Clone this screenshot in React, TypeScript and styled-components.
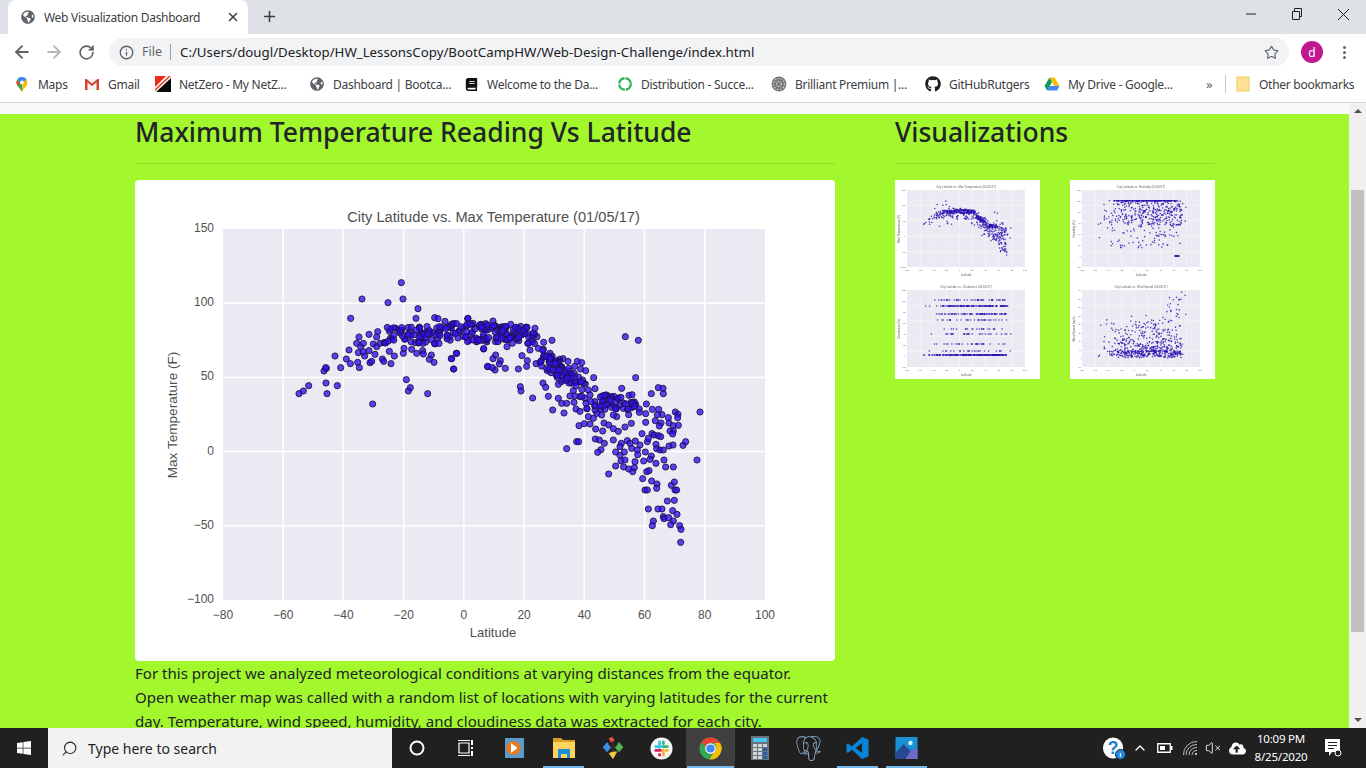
import styled, { createGlobalStyle } from 'styled-components';
import { ArrowLeft, ArrowRight, RotateCw, Info, Star, X, Plus, ChevronUp, Search, VolumeX } from 'lucide-react';
import { FaGlobeAmericas, FaGithub, FaWindows, FaBook, FaCloudUploadAlt } from 'react-icons/fa';
import { SiPostgresql } from 'react-icons/si';
import type { ReactNode } from 'react';

const GlobalStyle = createGlobalStyle`
	html, body, #root {
		margin: 0;
		height: 100%;
		overflow: hidden;
	}
	body {
		font-family: 'Noto Sans', 'Open Sans', sans-serif;
		color: #212529;
	}
`;

const Frame = styled.div`
	display: flex;
	flex-direction: column;
	height: 768px;
	width: 1366px;
	overflow: hidden;
`;

/* ---------- browser chrome ---------- */

const TabStrip = styled.div`
	display: flex;
	align-items: flex-end;
	height: 34px;
	padding-left: 8px;
	background: #dee1e6;
	flex: none;
`;

const Tab = styled.div`
	display: flex;
	align-items: center;
	width: 240px;
	height: 34px;
	padding: 0 8px 0 13px;
	box-sizing: border-box;
	background: #fff;
	border-radius: 8px 8px 0 0;
	font-size: 12px;
	color: #3c4043;
`;

const TabTitle = styled.span`
	flex: 1;
	margin-left: 9px;
	white-space: nowrap;
	letter-spacing: -0.3px;
`;

const NewTab = styled.div`
	display: flex;
	margin: 0 0 9px 13px;
	color: #3c4043;
`;

const WindowControls = styled.div`
	display: flex;
	align-items: center;
	margin-left: auto;
	height: 28px;
	align-self: flex-start;
	color: #202124;
`;

const WindowButton = styled.div`
	display: flex;
	justify-content: center;
	align-items: center;
	width: 46px;
`;

const Toolbar = styled.div`
	display: flex;
	align-items: center;
	height: 32px;
	background: #fff;
	flex: none;
`;

const NavButton = styled.div<{ $off?: boolean }>`
	display: flex;
	justify-content: center;
	width: 32px;
	margin-top: 4px;
	color: ${props => (props.$off ? '#b4b6b9' : '#5f6368')};
	&:first-child {
		margin-left: 6px;
	}
`;

const Omnibox = styled.div`
	display: flex;
	align-items: center;
	width: 1180px;
	height: 28px;
	margin: 4px 0 0 7px;
	padding: 0 10px;
	box-sizing: border-box;
	background: #f1f3f4;
	border-radius: 14px;
	font-size: 13.28px;
	color: #202124;
`;

const FileLabel = styled.span`
	margin-left: 8px;
	padding-right: 8px;
	border-right: 1px solid #9aa0a6;
	line-height: 16px;
	color: #5f6368;
	font-size: 12.5px;
`;

const Url = styled.span`
	flex: 1;
	margin-left: 9px;
	white-space: nowrap;
`;

const Avatar = styled.div`
	display: flex;
	justify-content: center;
	align-items: center;
	width: 22px;
	height: 22px;
	margin: 4px 0 0 12px;
	border-radius: 50%;
	background: #c2188f;
	color: #fff;
	font-size: 12px;
`;

const MenuDots = styled.div`
	display: flex;
	flex-direction: column;
	gap: 2px;
	margin: 4px 0 0 20px;
	i {
		display: block;
		width: 3px;
		height: 3px;
		border-radius: 50%;
		background: #5f6368;
	}
`;

const BookmarkBar = styled.div`
	display: flex;
	align-items: center;
	height: 36px;
	padding-left: 14px;
	background: #fff;
	border-bottom: 1px solid #d5d6d8;
	flex: none;
`;

const Bookmark = styled.div<{ $w: number }>`
	display: flex;
	align-items: center;
	gap: 8px;
	width: ${props => props.$w}px;
	flex: none;
	font-size: 12px;
	color: #3c4043;
	white-space: nowrap;
	letter-spacing: -0.27px;
`;

const IconSlot = styled.span`
	display: flex;
	justify-content: center;
	align-items: center;
	width: 16px;
	height: 18px;
	flex: none;
`;

const BarDivider = styled.div`
	width: 1px;
	height: 18px;
	margin: 0 9px;
	background: #c6c8ca;
`;

const Chevrons = styled.span`
	margin-left: 36px;
	width: 10px;
	font-size: 13px;
	color: #5f6368;
`;

/* ---------- page ---------- */

const Viewport = styled.div`
	display: flex;
	flex: 1;
	min-height: 0;
`;

const PageArea = styled.div`
	display: flex;
	flex-direction: column;
	flex: 1;
	min-width: 0;
	background: #a3f72d;
	overflow: hidden;
`;

const NavRemnant = styled.div`
	height: 11px;
	background: #f8f9fa;
	flex: none;
`;

const Columns = styled.div`
	display: flex;
	gap: 60px;
	padding: 1px 0 0 135px;
`;

const MainColumn = styled.section`
	width: 700px;
	flex: none;
`;

const SideColumn = styled.aside`
	width: 320px;
	flex: none;
`;

const Heading = styled.h3`
	margin: 0 0 16px;
	padding-bottom: 14px;
	border-bottom: 1px solid rgba(0, 0, 0, 0.1);
	font-size: 26.5px;
	line-height: 34px;
	font-weight: 500;
	white-space: nowrap;
	color: #212529;
`;

const ChartCard = styled.div`
	width: 700px;
	height: 481px;
	background: #fff;
	border-radius: 4px;
	svg {
		display: block;
	}
`;

const Blurb = styled.p`
	margin: 0;
	font-size: 15.05px;
	line-height: 24px;
	white-space: nowrap;
	color: #212529;
`;

const ThumbGrid = styled.div`
	display: grid;
	grid-template-columns: 145px 145px;
	column-gap: 30px;
`;

const Thumb = styled.div`
	background: #fff;
	width: 145px;
	height: 99.5px;
	overflow: hidden;
	svg {
		display: block;
		filter: blur(0.5px);
	}
`;

const ScrollTrack = styled.div`
	display: flex;
	flex-direction: column;
	align-items: center;
	width: 17px;
	background: #f0f0f0;
	flex: none;
`;

const ScrollArrow = styled.div<{ $down?: boolean }>`
	width: 0;
	height: 0;
	margin: 6px 0;
	border-left: 4px solid transparent;
	border-right: 4px solid transparent;
	${props => (props.$down ? 'border-top: 4px solid #505050;' : 'border-bottom: 4px solid #505050;')}
`;

const ScrollThumb = styled.div`
	width: 13px;
	height: 442px;
	margin: 71px 0 auto;
	background: #c1c1c1;
`;

/* ---------- taskbar ---------- */

const Taskbar = styled.div`
	display: flex;
	align-items: stretch;
	height: 40px;
	background: #202020;
	flex: none;
	color: #fff;
`;

const StartButton = styled.div`
	display: flex;
	justify-content: center;
	align-items: center;
	width: 48px;
`;

const SearchBox = styled.div`
	display: flex;
	align-items: center;
	gap: 10px;
	width: 344px;
	padding-left: 13px;
	box-sizing: border-box;
	background: #f2f2f2;
	color: #222;
	font-size: 14px;
	svg {
		transform: scaleX(-1);
	}
`;

const TaskCell = styled.div<{ $open?: boolean; $active?: boolean }>`
	position: relative;
	display: flex;
	justify-content: center;
	align-items: center;
	width: 49px;
	background: ${props => (props.$active ? '#3f3f3f' : 'transparent')};
	&::after {
		content: '';
		display: ${props => (props.$open || props.$active ? 'block' : 'none')};
		position: absolute;
		bottom: 0;
		left: ${props => (props.$active ? 1 : 4)}px;
		right: ${props => (props.$active ? 1 : 4)}px;
		height: 2px;
		background: #76b9ed;
	}
`;

const Tray = styled.div`
	display: flex;
	align-items: stretch;
	margin-left: auto;
	padding-right: 12px;
`;

const TrayCell = styled.div<{ $w: number }>`
	display: flex;
	justify-content: center;
	align-items: center;
	width: ${props => props.$w}px;
	color: #fff;
`;

const Clock = styled.div`
	display: flex;
	flex-direction: column;
	justify-content: center;
	align-items: center;
	gap: 2px;
	width: 62px;
	font-size: 11.5px;
	line-height: 16px;
	letter-spacing: -0.2px;
	white-space: nowrap;
`;

/* ---------- drawings ---------- */

const MapsIcon = () => (
	<svg width='16' height='17' viewBox='0 0 16 16'>
		<path d='M8 .5a5.500 5.500 0 0 0-5.500 5.500c0 3.600 4 6 5.500 9.500z' fill='#34a853' />
		<path d='M8 .5A5.500 5.500 0 0 1 13.500 6c0 3.600-4 6-5.500 9.500z' fill='#fbbc04' />
		<path d='M3.500 2.800a5.500 5.500 0 0 1 9 0L8 7z' fill='#4285f4' />
		<path d='M3.200 3.500 6 6.500 3.800 9.500a5.500 5.500 0 0 1-.6-6z' fill='#ea4335' />
		<circle cx='8' cy='6' r='1.900' fill='#fff' />
	</svg>
);

const GmailIcon = () => (
	<svg width='16' height='16' viewBox='0 0 16 16'>
		<path d='M1 3h14v11H1z' fill='#f2f2f2' />
		<path d='M1 3v11h2.500V6.500L8 10l4.500-3.500V14H15V3h-1.500L8 7.500 2.500 3z' fill='#d9402f' />
	</svg>
);

const NetZeroIcon = () => (
	<svg width='16' height='16' viewBox='0 0 16 16'>
		<path d='M0 0h16v16H0z' fill='#fff' />
		<path d='M0 11 11 0H0z M0 13 14 0h2L0 15z' fill='#ee2b14' />
		<path d='M1 16 16 2v14z' fill='#0a0a0a' />
	</svg>
);

const RingIcon = () => (
	<svg width='16' height='16' viewBox='0 0 16 16'>
		<circle cx='8' cy='8' r='5.800' fill='none' stroke='#2fb457' strokeWidth='2.400' strokeDasharray='8 1.100' />
	</svg>
);

const BrilliantIcon = () => (
	<svg width='16' height='16' viewBox='0 0 16 16'>
		<circle cx='8' cy='8' r='7.500' fill='#777' />
		<circle cx='8' cy='8' r='5.500' fill='none' stroke='#ccc' strokeWidth='1.200' strokeDasharray='1.500 1.500' />
		<circle cx='8' cy='8' r='2.500' fill='none' stroke='#ddd' strokeWidth='1.200' strokeDasharray='1 1' />
	</svg>
);

const DriveIcon = () => (
	<svg width='16' height='16' viewBox='0 0 16 16'>
		<path d='M5.500 1.500h5L15.500 10h-5z' fill='#fbbc04' />
		<path d='M5.500 1.500 .5 10 3 14.500 8 6z' fill='#0f9d58' />
		<path d='M3 14.500h10L15.500 10h-10z' fill='#4285f4' />
	</svg>
);

const FolderBookmark = () => (
	<svg width='14' height='16' viewBox='0 0 14 16'>
		<path d='M1 1h12v14H1z' fill='#fde293' stroke='#e8c65a' strokeWidth='1' />
	</svg>
);

const RestoreWindow = () => (
	<svg width='12' height='12' viewBox='0 0 12 12' fill='none' stroke='#202124'>
		<path d='M1.500 3.500h7v8h-7z M3.500 3.500V.5h7v8h-2' />
	</svg>
);

const MinWindow = () => (
	<svg width='12' height='12' viewBox='0 0 12 12'>
		<path d='M1 6h10' stroke='#202124' />
	</svg>
);

const CloseWindow = () => (
	<svg width='13' height='13' viewBox='0 0 13 13'>
		<path d='M1 1l11 11M12 1 1 12' stroke='#202124' />
	</svg>
);

const CortanaIcon = () => (
	<svg width='18' height='18' viewBox='0 0 18 18'>
		<circle cx='9' cy='9' r='6.500' fill='none' stroke='#fff' strokeWidth='2' />
	</svg>
);

const TaskViewIcon = () => (
	<svg width='18' height='18' viewBox='0 0 18 18' fill='none' stroke='#fff' strokeWidth='1.200'>
		<path d='M2 4h10v10H2z M1 1.500h12 M1 16.500h12' />
		<path d='M15 1v5 M15 8v2 M15 12v5' strokeWidth='2' />
	</svg>
);

const MediaIcon = () => (
	<svg width='19' height='20' viewBox='0 0 19 20'>
		<path d='M0 0h19v20H0z' fill='#5b9bc9' />
		<circle cx='8.500' cy='10' r='7' fill='#e87a1d' />
		<path d='M6 5 12.500 10 6 15z' fill='#fff' />
	</svg>
);

const FolderIcon = () => (
	<svg width='22' height='20' viewBox='0 0 22 20'>
		<path d='M0 0h8l2 2h12v4H0z' fill='#d99e22' />
		<path d='M0 4h22v16H0z' fill='#ffd35c' />
		<path d='M5 11h12v9h-3v-4H8v4H5z' fill='#1d8fd6' />
	</svg>
);

const KrakenIcon = () => (
	<svg width='24' height='24' viewBox='0 0 26 28'>
		<path d='M1 13l5-6 5 6-5 6z' fill='#3f8fe0' />
		<path d='M15 13l5-6 5 6-5 6z' fill='#4fb553' />
		<path d='M8 3l4-2 3 4-4 3z' fill='#e8533f' />
		<path d='M13 18l5 0-5 9-5-7z' fill='#f2c83c' />
		<path d='M13 6v12M8 9l5 6 5-6' stroke='#3b2a2a' strokeWidth='1.800' fill='none' />
	</svg>
);

const SlackIcon = () => (
	<svg width='23' height='23' viewBox='0 0 24 24'>
		<circle cx='12' cy='12' r='11.500' fill='#f6f6f6' />
		<path d='M10 5v6' stroke='#36c5f0' strokeWidth='2.800' strokeLinecap='round' />
		<path d='M6 10h3' stroke='#36c5f0' strokeWidth='2.800' strokeLinecap='round' />
		<path d='M18 10h-5' stroke='#2eb67d' strokeWidth='2.800' strokeLinecap='round' />
		<path d='M14 5v2' stroke='#2eb67d' strokeWidth='2.800' strokeLinecap='round' />
		<path d='M14 19v-5' stroke='#ecb22e' strokeWidth='2.800' strokeLinecap='round' />
		<path d='M18 14h-1' stroke='#ecb22e' strokeWidth='2.800' strokeLinecap='round' />
		<path d='M6 14h5' stroke='#e01e5a' strokeWidth='2.800' strokeLinecap='round' />
		<path d='M10 19v-1' stroke='#e01e5a' strokeWidth='2.800' strokeLinecap='round' />
	</svg>
);

const ChromeIcon = () => (
	<svg width='23' height='23' viewBox='0 0 24 24'>
		<circle cx='12' cy='12' r='11.500' fill='#34a853' />
		<path d='M12 .5A11.500 11.500 0 0 1 22 6.300H12a5.700 5.700 0 0 0-5.300 3.600L2.400 5.700A11.500 11.500 0 0 1 12 .5z' fill='#ea4335' />
		<path d='M22 6.300A11.500 11.500 0 0 1 11 23.500l5-8.200a5.700 5.700 0 0 0 0-9z' fill='#fbbc04' />
		<circle cx='12' cy='12' r='5.500' fill='#fff' />
		<circle cx='12' cy='12' r='4.300' fill='#4285f4' />
	</svg>
);

const CalcIcon = () => (
	<svg width='18' height='24' viewBox='0 0 18 24'>
		<path d='M0 0h18v24H0z' fill='#6a7379' />
		<path d='M2 2h14v4H2z' fill='#42c6f0' />
		{[8, 12, 16, 20].flatMap(y =>
			[2, 7, 12].map(x => (
				<rect key={`${x}-${y}`} x={x} y={y} width='4' height='3' fill={x === 12 && y > 8 ? '#1f5fa8' : '#cfd4d8'} />
			))
		)}
	</svg>
);

const CodeIcon = () => (
	<svg width='25' height='24' viewBox='0 0 26 26'>
		<path d='M18 1 25 4v18l-7 3-11-10-4.500 3.500L1 17v-8l1.500-.8L7 11.500zM18 7.500 11 13l7 5.500z' fill='#0a84d6' fillRule='evenodd' />
	</svg>
);

const PhotosIcon = () => (
	<svg width='23' height='22' viewBox='0 0 22 22'>
		<path d='M0 0h22v22H0z' fill='#1992d4' />
		<circle cx='15' cy='6' r='2.200' fill='#d8f0fb' />
		<path d='M0 16 8 7l7 7 7-3v11H0z' fill='#27478f' />
		<path d='M10 22l5-8 7-3v11z' fill='#6d6cc5' />
	</svg>
);

const HelpIcon = () => (
	<svg width='24' height='23' viewBox='0 0 26 25'>
		<ellipse cx='12' cy='12' rx='11' ry='11.500' fill='#fff' />
		<text x='12' y='19' textAnchor='middle' fontFamily='Liberation Sans, sans-serif' fontWeight='700' fontSize='19' fill='#1a7fd0'>?</text>
		<circle cx='20' cy='19' r='5.500' fill='#1e88e5' stroke='#202020' />
		<path d='M20 17.500v4' stroke='#fff' strokeWidth='1.400' />
	</svg>
);

const BatteryIcon = () => (
	<svg width='16' height='12' viewBox='0 0 16 12'>
		<path d='M.75 1.750h12.500v8.500H.75z' fill='none' stroke='#fff' strokeWidth='1.300' />
		<path d='M3 4h5v4H3z M14 4h1.500v4H14z' fill='#fff' />
	</svg>
);

const WifiIcon = () => (
	<svg width='16' height='16' viewBox='0 0 16 16' fill='none' stroke='#bbb' strokeWidth='1'>
		<path d='M1.500 15A13 13 0 0 1 15 1.500 M4 15A10.500 10.500 0 0 1 15 4.500 M7 15A7.500 7.500 0 0 1 15 7.500 M10 15A5 5 0 0 1 15 10.500' />
		<circle cx='14' cy='14' r='1' fill='#fff' stroke='none' />
	</svg>
);

const NotifyIcon = () => (
	<svg width='18' height='20' viewBox='0 0 18 20'>
		<path d='M1 1h15v13H8l-3 4v-4H1z' fill='#fff' />
		<path d='M4 4.500h9M4 7.500h9M4 10.500h6' stroke='#202020' strokeWidth='1.200' />
		<circle cx='14' cy='15' r='3' fill='#202020' stroke='#fff' />
	</svg>
);

/* ---------- chart data ---------- */

function makeRandom(seed: number) {
	let s = seed;
	return () => {
		s = (s * 16807) % 2147483647;
		return (s - 1) / 2147483646;
	};
}

// read off the picture, as [x, y] in the 3x crops
const leftCrop = [
	[447, 581], [460, 573], [476, 557], [528, 549], [531, 581], [562, 557], [522, 513], [529, 505], [527, 503], [555, 468],
	[572, 503], [589, 477], [597, 450], [601, 491], [602, 355], [623, 487], [628, 503], [627, 411], [636, 297], [644, 468],
	[657, 403], [660, 488], [665, 484], [668, 612], [675, 463], [683, 395], [680, 411], [697, 477], [701, 484], [714, 308],
	[723, 491], [718, 454], [733, 468], [754, 248], [759, 297], [804, 326], [798, 355], [769, 539], [781, 563], [775, 573],
	[833, 581], [852, 487], [844, 465], [838, 478], [822, 400], [854, 353], [864, 356], [885, 364], [904, 476], [911, 507],
	[919, 460], [953, 356], [1001, 447], [1013, 500], [620, 430], [632, 440], [640, 430], [625, 458], [640, 455], [657, 452],
	[670, 432], [680, 440], [690, 430], [702, 428], [760, 460], [762, 445], [785, 448], [800, 460], [818, 452], [820, 462],
];

const rightCrop = [
	[54, 55], [69, 70], [107, 71], [129, 63], [137, 78], [182, 73], [198, 82], [212, 92], [235, 102], [261, 110], [306, 121],
	[281, 127], [243, 122], [233, 130], [240, 150], [265, 145], [280, 148], [300, 160], [298, 180], [272, 185], [258, 191],
	[230, 199], [232, 182], [216, 167], [205, 207], [166, 205], [135, 210], [127, 203], [113, 199], [151, 182], [148, 192],
	[129, 176], [137, 165], [101, 146], [20, 160], [5, 176], [11, 207], [171, 140], [339, 176], [329, 178], [354, 184],
	[382, 184], [395, 188], [374, 199], [392, 207], [407, 212], [431, 233], [335, 200], [320, 208], [292, 212], [303, 218],
	[318, 225], [340, 220], [355, 225], [325, 253], [279, 249], [287, 262], [295, 289], [248, 294], [308, 330], [342, 339],
	[378, 327], [390, 334], [211, 260], [213, 273], [350, 240], [378, 247], [390, 245], [406, 252], [415, 270], [435, 266],
	[370, 272], [360, 288], [375, 288], [390, 290], [405, 295], [420, 285], [325, 295], [335, 310], [350, 310], [372, 307],
	[408, 310], [435, 305], [457, 288], [468, 300], [484, 312], [505, 294], [515, 265], [537, 286], [557, 233], [526, 110],
	[565, 121], [604, 281], [625, 263], [639, 265], [640, 281], [589, 312], [607, 328], [626, 328], [636, 344], [622, 344],
	[676, 336], [684, 343], [683, 353], [750, 336], [655, 353], [657, 369], [670, 377], [685, 376], [660, 393], [670, 393],
	[668, 402], [587, 341], [587, 367], [616, 362], [633, 369], [628, 378], [544, 370], [525, 381], [462, 369], [476, 375],
	[490, 386], [505, 394], [458, 393], [437, 387], [387, 377], [403, 371], [420, 372], [430, 355], [415, 350], [440, 340],
	[455, 345], [453, 327], [435, 330], [500, 350], [490, 345], [510, 315], [520, 325], [545, 323], [557, 313], [568, 327],
	[568, 337], [536, 344], [576, 401], [606, 401], [612, 405], [625, 407], [632, 410], [592, 425], [595, 415], [618, 433],
	[620, 446], [630, 450], [640, 450], [657, 438], [669, 435], [699, 436], [707, 425], [741, 480], [436, 417], [448, 420],
	[463, 430], [490, 420], [514, 430], [510, 440], [497, 456], [510, 466], [523, 456], [532, 422], [540, 430], [556, 423],
	[570, 435], [545, 445], [562, 450], [563, 464], [586, 456], [604, 468], [600, 478], [581, 483], [555, 485], [513, 483],
	[525, 480], [497, 498], [521, 501], [536, 507], [548, 515], [553, 503], [476, 522], [453, 449], [443, 457], [350, 446],
	[380, 425], [386, 425], [618, 490], [642, 480], [647, 501], [670, 501], [590, 515], [597, 512], [578, 536], [605, 543],
	[621, 552], [620, 565], [585, 570], [592, 570], [664, 556], [673, 546], [675, 570], [680, 570], [652, 603], [673, 601],
	[595, 627], [624, 627], [636, 627], [668, 632], [681, 643], [640, 650], [642, 656], [656, 653], [670, 663], [662, 674],
	[610, 663], [607, 677], [689, 677], [693, 688], [692, 727],
];

function buildTemperaturePoints() {
	const rand = makeRandom(4711);
	const pts: [number, number][] = [
		...leftCrop.map(([x, y]) => [150 + x / 3, 200 + y / 3] as [number, number]),
		...rightCrop.map(([x, y]) => [450 + x / 3, 300 + y / 3] as [number, number]),
	];
	// the dense band over the equator
	for (let i = 0; i < 190; i++) {
		const x = 385 + rand() * 150;
		const top = x < 450 ? 326 : 323 + (x - 450) * 0.04;
		pts.push([x, top + rand() * 18]);
	}
	for (let i = 0; i < 60; i++) {
		const x = 540 + rand() * 45;
		pts.push([x, 345 + (x - 540) * 0.8 + rand() * 20]);
	}
	for (let i = 0; i < 40; i++) {
		pts.push([585 + rand() * 50, 402 + (rand() - 0.5) * 16]);
	}
	return pts;
}

const temperaturePoints = buildTemperaturePoints();

type MiniPoint = [number, number];

// latitude position (0-1 of the plot width) taken from the big chart
const latShare = temperaturePoints.map(([x]) => (x - 223) / 542);

const miniCharts: { title: string; yLabel: string; ticks: number[]; points: MiniPoint[] }[] = [
	{
		title: 'City Latitude vs. Max Temperature (01/05/17)',
		yLabel: 'Max Temperature (F)',
		ticks: [150, 100, 50, 0, -50, -100],
		points: temperaturePoints.map(([x, y]) => [12 + ((x - 223) / 542) * 118, 10 + ((y - 229) / 371) * 77]),
	},
	{
		title: 'City Latitude vs. Humidity (01/05/17)',
		yLabel: 'Humidity (%)',
		ticks: [120, 100, 80, 60, 40, 20, 0, -20],
		points: (() => {
			const rand = makeRandom(91);
			return latShare.map((lat, i): MiniPoint => {
				const pick = rand();
				const x = 12 + lat * 118;
				if (lat > 0.79 && lat < 0.83 && i % 3 === 0) return [x, 76];
				if (pick < 0.3 && lat > 0.22 && lat < 0.8) return [x, 20.7];
				if (pick < 0.75) return [x, 21 + rand() * 24];
				return [x, 28 + rand() * 40];
			});
		})(),
	},
	{
		title: 'City Latitude vs. Cloudiness (01/05/17)',
		yLabel: 'Cloudiness (%)',
		ticks: [120, 100, 80, 60, 40, 20, 0, -20],
		points: (() => {
			const rand = makeRandom(2024);
			const rows = [75, 75, 75, 75, 75, 75, 26, 26, 26, 26, 34, 34, 34, 40, 49, 54, 64, 71, 20];
			return latShare.map((lat): MiniPoint => [12 + lat * 118, rows[Math.floor(rand() * rows.length)]]);
		})(),
	},
	{
		title: 'City Latitude vs. Wind Speed (01/05/17)',
		yLabel: 'Wind Speed (mph)',
		ticks: [40, 35, 30, 25, 20, 15, 10, 5, 0, -5],
		points: (() => {
			const rand = makeRandom(777);
			return latShare.map((lat): MiniPoint => {
				const r = rand();
				const spread = lat > 0.72 ? 62 : 36;
				return [12 + lat * 118, 78 - r * r * r * spread - rand() * 7];
			});
		})(),
	},
];

const xTicks = [-80, -60, -40, -20, 0, 20, 40, 60, 80, 100];
const yTicks = [150, 100, 50, 0, -50, -100];
const CHART_FONT = 'Liberation Sans, Arial, sans-serif';

const fmt = (n: number) => String(n).replace('-', '\u2212');

function TemperatureChart() {
	const xAt = (lat: number) => 223 + ((lat + 80) / 180) * 542;
	const yAt = (t: number) => 229 + ((150 - t) / 250) * 371;
	return (
		<svg width='700' height='481' viewBox='135 180 700 481'>
			<rect x='223' y='229' width='542' height='371' fill='#eaeaf2' />
			{xTicks.slice(1, -1).map(t => (
				<line key={t} x1={xAt(t)} x2={xAt(t)} y1='229' y2='600' stroke='#fff' strokeWidth='1.500' />
			))}
			{yTicks.slice(1, -1).map(t => (
				<line key={t} x1='223' x2='765' y1={yAt(t)} y2={yAt(t)} stroke='#fff' strokeWidth='1.500' />
			))}
			<g fontFamily={CHART_FONT} fill='#505050'>
				<text x='493.500' y='222' textAnchor='middle' fontSize='14.650'>City Latitude vs. Max Temperature (01/05/17)</text>
				{yTicks.map(t => (
					<text key={t} x='214' y={yAt(t) + 3} textAnchor='end' fontSize='12'>{fmt(t)}</text>
				))}
				{xTicks.map(t => (
					<text key={t} x={xAt(t)} y='619' textAnchor='middle' fontSize='12'>{fmt(t)}</text>
				))}
				<text x='493' y='637' textAnchor='middle' fontSize='13'>Latitude</text>
				<text transform='translate(177 415) rotate(-90)' textAnchor='middle' fontSize='13.600'>Max Temperature (F)</text>
			</g>
			<g fill='#3a0cf2' fillOpacity='0.78' stroke='#14143c' strokeOpacity='0.85' strokeWidth='1'>
				{temperaturePoints.map(([x, y], i) => (
					<circle key={i} cx={x} cy={y} r='3.100' />
				))}
			</g>
		</svg>
	);
}

function MiniChart({ chart }: { chart: (typeof miniCharts)[number] }) {
	return (
		<svg width='145' height='99.500' viewBox='0 0 145 99.500'>
			<rect x='12' y='10' width='118' height='77' fill='#eaeaf2' />
			{[1, 2, 3, 4, 5, 6, 7, 8].map(i => (
				<line key={i} x1={12 + i * 13.100} x2={12 + i * 13.100} y1='10' y2='87' stroke='#fff' strokeWidth='0.400' />
			))}
			{[1, 2, 3, 4].map(i => (
				<line key={i} x1='12' x2='130' y1={10 + i * 15.400} y2={10 + i * 15.400} stroke='#fff' strokeWidth='0.400' />
			))}
			<g fontFamily={CHART_FONT} fill='#666' fontSize='3'>
				<text x='71' y='7.500' textAnchor='middle'>{chart.title}</text>
				<text x='71' y='95.500' textAnchor='middle'>Latitude</text>
				<text transform='translate(5 49) rotate(-90)' textAnchor='middle'>{chart.yLabel}</text>
				{chart.ticks.map((t, i) => (
					<text key={t} x='11' y={11 + (i * 77) / (chart.ticks.length - 1)} textAnchor='end' fontSize='2.500'>{fmt(t)}</text>
				))}
				{xTicks.map((t, i) => (
					<text key={t} x={12 + i * 13.100} y='90.500' textAnchor='middle' fontSize='2.500'>{fmt(t)}</text>
				))}
			</g>
			<g fill='#2a12b0' fillOpacity='0.8'>
				{chart.points.map(([x, y], i) => (
					<circle key={i} cx={x} cy={y} r='0.800' />
				))}
			</g>
		</svg>
	);
}

const bookmarks: { w: number; icon: ReactNode; label: string }[] = [
	{ w: 70, icon: <MapsIcon />, label: 'Maps' },
	{ w: 71, icon: <GmailIcon />, label: 'Gmail' },
	{ w: 154, icon: <NetZeroIcon />, label: 'NetZero - My NetZ...' },
	{ w: 154, icon: <FaGlobeAmericas size={14} color='#5f6368' />, label: 'Dashboard | Bootca...' },
	{ w: 154, icon: <FaBook size={13} color='#111' />, label: 'Welcome to the Da...' },
	{ w: 154, icon: <RingIcon />, label: 'Distribution - Succe...' },
	{ w: 154, icon: <BrilliantIcon />, label: 'Brilliant Premium |...' },
	{ w: 119, icon: <FaGithub size={16} color='#1b1f23' />, label: 'GitHubRutgers' },
	{ w: 126, icon: <DriveIcon />, label: 'My Drive - Google...' },
];

export default function App() {
	return (
		<Frame>
			<GlobalStyle />
			<TabStrip>
				<Tab>
					<FaGlobeAmericas size={14} color='#5f6368' />
					<TabTitle>Web Visualization Dashboard</TabTitle>
					<X size={14} strokeWidth={2.5} color='#3c4043' />
				</Tab>
				<NewTab>
					<Plus size={17} strokeWidth={2.2} />
				</NewTab>
				<WindowControls>
					<WindowButton><MinWindow /></WindowButton>
					<WindowButton><RestoreWindow /></WindowButton>
					<WindowButton><CloseWindow /></WindowButton>
				</WindowControls>
			</TabStrip>

			<Toolbar>
				<NavButton><ArrowLeft size={20} strokeWidth={2.2} /></NavButton>
				<NavButton $off><ArrowRight size={20} strokeWidth={2.2} /></NavButton>
				<NavButton><RotateCw size={17} strokeWidth={2.4} /></NavButton>
				<Omnibox>
					<Info size={15} color='#5f6368' strokeWidth={2.2} />
					<FileLabel>File</FileLabel>
					<Url>C:/Users/dougl/Desktop/HW_LessonsCopy/BootCampHW/Web-Design-Challenge/index.html</Url>
					<Star size={15} color='#5f6368' strokeWidth={1.8} />
				</Omnibox>
				<Avatar>d</Avatar>
				<MenuDots><i /><i /><i /></MenuDots>
			</Toolbar>

			<BookmarkBar>
				{bookmarks.map(b => (
					<Bookmark key={b.label} $w={b.w}>
						<IconSlot>{b.icon}</IconSlot>
						<span>{b.label}</span>
					</Bookmark>
				))}
				<Chevrons>»</Chevrons>
				<BarDivider />
				<Bookmark $w={110}>
					<IconSlot><FolderBookmark /></IconSlot>
					<span>Other bookmarks</span>
				</Bookmark>
			</BookmarkBar>

			<Viewport>
				<PageArea>
					<NavRemnant />
					<Columns>
						<MainColumn>
							<Heading>Maximum Temperature Reading Vs Latitude</Heading>
							<ChartCard>
								<TemperatureChart />
							</ChartCard>
							<Blurb>
								For this project we analyzed meteorological conditions at varying distances from the equator.
								<br />
								Open weather map was called with a random list of locations with varying latitudes for the current
								<br />
								day. Temperature, wind speed, humidity, and cloudiness data was extracted for each city.
							</Blurb>
						</MainColumn>
						<SideColumn>
							<Heading>Visualizations</Heading>
							<ThumbGrid>
								{miniCharts.map(c => (
									<Thumb key={c.title}><MiniChart chart={c} /></Thumb>
								))}
							</ThumbGrid>
						</SideColumn>
					</Columns>
				</PageArea>
				<ScrollTrack>
					<ScrollArrow />
					<ScrollThumb />
					<ScrollArrow $down />
				</ScrollTrack>
			</Viewport>

			<Taskbar>
				<StartButton><FaWindows size={16} color='#fff' /></StartButton>
				<SearchBox>
					<Search size={17} strokeWidth={1.5} />
					Type here to search
				</SearchBox>
				<TaskCell><CortanaIcon /></TaskCell>
				<TaskCell><TaskViewIcon /></TaskCell>
				<TaskCell><MediaIcon /></TaskCell>
				<TaskCell $open><FolderIcon /></TaskCell>
				<TaskCell><KrakenIcon /></TaskCell>
				<TaskCell><SlackIcon /></TaskCell>
				<TaskCell $active><ChromeIcon /></TaskCell>
				<TaskCell><CalcIcon /></TaskCell>
				<TaskCell><SiPostgresql size={25} color='#8fb0cc' /></TaskCell>
				<TaskCell $open><CodeIcon /></TaskCell>
				<TaskCell $open><PhotosIcon /></TaskCell>
				<Tray>
					<TrayCell $w={27}><HelpIcon /></TrayCell>
					<TrayCell $w={26}><ChevronUp size={16} /></TrayCell>
					<TrayCell $w={24}><BatteryIcon /></TrayCell>
					<TrayCell $w={25}><WifiIcon /></TrayCell>
					<TrayCell $w={22}><VolumeX size={16} strokeWidth={1.3} /></TrayCell>
					<TrayCell $w={26}><FaCloudUploadAlt size={17} /></TrayCell>
					<Clock>
						<span>10:09 PM</span>
						<span>8/25/2020</span>
					</Clock>
					<TrayCell $w={42}><NotifyIcon /></TrayCell>
				</Tray>
			</Taskbar>
		</Frame>
	);
}
